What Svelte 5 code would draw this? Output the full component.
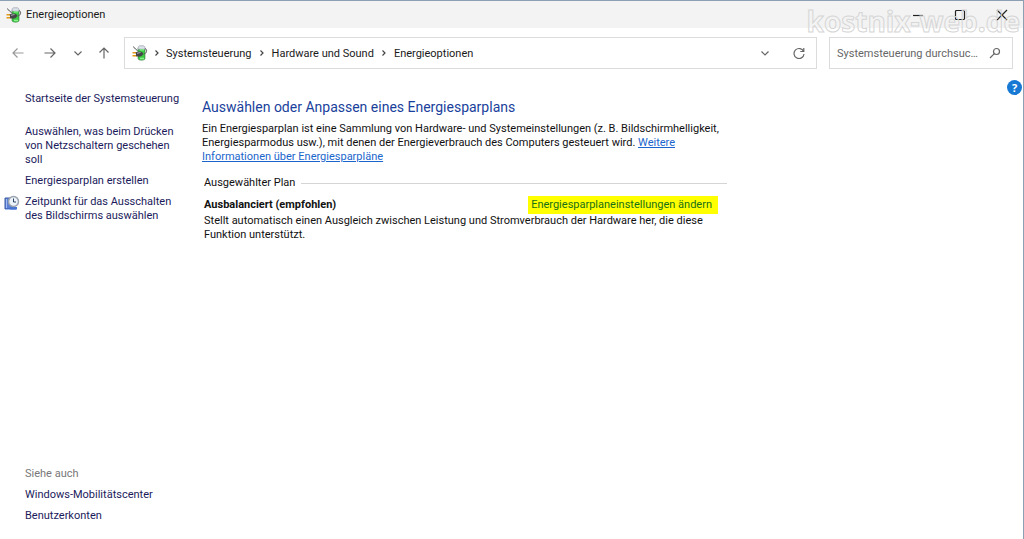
<script>
  const crumbs = ['Systemsteuerung', 'Hardware und Sound', 'Energieoptionen'];
  const tasks = [
    { text: 'Auswählen, was beim Drücken von Netzschaltern geschehen soll' },
    { text: 'Energiesparplan erstellen' },
    { text: 'Zeitpunkt für das Ausschalten des Bildschirms auswählen', icon: true }
  ];
  const related = ['Windows-Mobilitätscenter', 'Benutzerkonten'];
</script>

{#snippet power()}
  <svg class="power" width="16" height="16" viewBox="0 0 16 16" aria-hidden="true">
    <path d="M6 3.500h7v10c0 2.200-7 2.200-7 0z" fill="#3cca43" stroke="#397341" stroke-width=".6" />
    <path d="M6 4.200h7V2.200L11.500.8h-4L6 2.200z" fill="#dde2ea" stroke="#8a929e" stroke-width=".6" />
    <path d="M8 4.900h4M8 13.500h4" stroke="#8af28a" stroke-width="1.300" />
    <path d="M1.500 1.500C2 4 4 3 5.500 6M11.500 9c3-.5 3.500-2.500 2.800-4.500l-1.300-1" fill="none" stroke="#555" stroke-width="1" />
    <path d="M.5 7.800h4M.5 10.800h4.500" stroke="#e09a18" stroke-width="1.500" />
    <path d="M3.800 7.200c2.500-1.300 5.500-1 7 .6 1 1.700-1 3.900-3.500 3.900l-3.200-.5z" fill="#444648" />
    <path d="M5 8.300 8.500 7.500" stroke="#b4b9bd" stroke-width=".9" />
  </svg>
{/snippet}

{#snippet chevron()}
  <svg width="6" height="8" viewBox="0 0 6 8" aria-hidden="true"><path d="m1.500 1.500 2.500 2.500-2.500 2.500" fill="none" stroke="#444" stroke-width="1.200" /></svg>
{/snippet}

<div class="window">
  <header class="titlebar">
    {@render power()}
    <span class="caption">Energieoptionen</span>
    <div class="controls">
      <button aria-label="Minimieren"><svg width="12" height="12"><path d="M1 6.500h10" /></svg></button>
      <button aria-label="Maximieren"><svg width="12" height="12"><rect x="1.500" y="1.500" width="9" height="9" rx="1" /></svg></button>
      <button aria-label="Schließen"><svg width="12" height="12"><path d="m1 1 10 10M11 1 1 11" /></svg></button>
    </div>
    <div class="watermark">kostnix-web.de</div>
  </header>

  <nav class="toolbar" aria-label="Navigation">
    <div class="history">
      <button class="dim" aria-label="Zurück"><svg width="12" height="12"><path d="M11.500 6H1M5.500 1.500 1 6l4.500 4.500" /></svg></button>
      <button aria-label="Vorwärts"><svg width="12" height="12"><path d="M.5 6H11M6.500 1.500 11 6l-4.500 4.500" /></svg></button>
      <button aria-label="Zuletzt besucht"><svg width="12" height="12"><path d="m2.500 4.500 3.500 3.500 3.500-3.500" /></svg></button>
      <button aria-label="Nach oben"><svg width="12" height="12"><path d="M6 11.500V1M1.500 5.500 6 1l4.500 4.500" /></svg></button>
    </div>
    <div class="address">
      {@render power()}
      {#each crumbs as crumb}
        <span class="sep">{@render chevron()}</span>
        <a class="crumb" href="#top">{crumb}</a>
      {/each}
      <div class="address-tools">
        <button aria-label="Vorherige Orte"><svg width="12" height="12"><path d="m2.500 4.500 3.500 3.500 3.500-3.500" /></svg></button>
        <button aria-label="Aktualisieren"><svg width="12" height="12"><path d="M10.600 4.500A5 5 0 1 0 11 7M10.800 1v3.500h-3.500" /></svg></button>
      </div>
    </div>
    <div class="search">
      <input type="text" aria-label="Systemsteuerung durchsuchen" placeholder="Systemsteuerung durchsuc..." />
      <button aria-label="Suchen"><svg width="12" height="12"><circle cx="7.500" cy="4.500" r="3" /><path d="M5.300 6.700 1 11" /></svg></button>
    </div>
  </nav>

  <div class="body">
    <aside>
      <a class="home" href="#home">Startseite der Systemsteuerung</a>
      <ul class="tasks">
        {#each tasks as task}
          <li>
            <span class="mark">
              {#if task.icon}
                <svg width="16" height="16" viewBox="0 0 16 16" aria-hidden="true">
                  <path d="M1 3h8v11H1z" fill="#5b80d6" stroke="#3c5ca6" />
                  <path d="M2.500 4v9M1 14.500h11" stroke="#a3bcf2" />
                  <path d="M6 12h7v2.500H6z" fill="#4773d2" />
                  <circle cx="9.500" cy="6.500" r="5" fill="#edf3fa" stroke="#9aa2ad" stroke-width="1.500" />
                  <path d="M9.500 3.500v3.500h2.500" fill="none" stroke="#2a4065" />
                </svg>
              {/if}
            </span>
            <a href="#task">{task.text}</a>
          </li>
        {/each}
      </ul>
      <div class="related">
        <span>Siehe auch</span>
        {#each related as item}
          <a href="#related">{item}</a>
        {/each}
      </div>
    </aside>

    <main>
      <h1>Auswählen oder Anpassen eines Energiesparplans</h1>
      <p class="intro">
        Ein Energiesparplan ist eine Sammlung von Hardware- und Systemeinstellungen (z. B. Bildschirmhelligkeit,
        Energiesparmodus usw.), mit denen der Energieverbrauch des Computers gesteuert wird.
        <a href="#info">Weitere Informationen über Energiesparpläne</a>
      </p>
      <section>
        <h2>Ausgewählter Plan</h2>
        <div class="plan">
          <strong>Ausbalanciert (empfohlen)</strong>
          <a href="#change">Energiesparplaneinstellungen ändern</a>
        </div>
        <p>Stellt automatisch einen Ausgleich zwischen Leistung und Stromverbrauch der Hardware her, die diese Funktion unterstützt.</p>
      </section>
    </main>

    <button class="help" aria-label="Hilfe">?</button>
  </div>
</div>

<style>
  :global(body) { margin: 0; }
  .window {
    box-sizing: border-box;
    min-height: 100vh;
    display: flex;
    flex-direction: column;
    border-top: 1px solid #8d9fb3;
    border-right: 1px solid #8d9fb3;
    background: #fff;
    color: #1a1a1a;
    font: 11px/14px Roboto, "Noto Sans", sans-serif;
  }
  a { color: inherit; text-decoration: none; }
  button { padding: 0; border: 0; background: none; display: grid; place-items: center; }
  button svg { fill: none; stroke: #666; stroke-width: 1.2; }
  h1, h2, p, ul { margin: 0; padding: 0; font-weight: 400; }
  svg { display: block; flex: none; }

  .titlebar { position: relative; display: flex; align-items: center; height: 27px; padding-left: 6px; gap: 4px; background: #f3f3f3; }
  .controls { display: flex; margin-left: auto; }
  .controls button { width: 42px; height: 27px; }
  .controls svg { stroke: #222; }
  .watermark {
    position: absolute;
    top: 4px;
    right: 3px;
    font: 700 28px/32px "Open Sans", sans-serif;
    color: transparent;
    -webkit-text-stroke: 1px #d6d6d6;
    pointer-events: none;
  }

  .toolbar { display: flex; align-items: center; padding: 9px 10px 9px 6px; }
  .history { display: flex; width: 118px; }
  .history button { width: 29px; height: 24px; }
  .history button:first-child { width: 24px; }
  .history button:nth-child(2) { width: 40px; }
  .history button:nth-child(3) { width: 16px; }
  .history button:last-child { width: 36px; }
  .history .dim svg { stroke: #999; }
  .address, .search { box-sizing: border-box; height: 32px; display: flex; align-items: center; border: 1px solid #dcdcdc; }
  .address { flex: 1; padding-left: 7px; }
  .sep { width: 18px; display: grid; place-items: center; }
  .crumb + .sep { width: 20px; }
  .crumb { white-space: nowrap; line-height: 16px; padding-top: 1px; }
  .address-tools { display: flex; margin-left: auto; }
  .address-tools button { width: 34px; height: 30px; }
  .search { width: 184px; margin-left: 12px; padding-left: 7px; }
  .search input { flex: 1; min-width: 0; border: 0; padding: 1px 0 0; outline: 0; font: inherit; background: none; text-overflow: ellipsis; }
  .search input::placeholder { color: #666; opacity: 1; }
  .search button { width: 34px; height: 30px; }

  .body { flex: 1; display: flex; color: #111; }
  aside { width: 177px; flex: none; display: flex; flex-direction: column; padding: 14px 0 16px; margin-right: 25px; box-sizing: border-box; color: #1b1b5c; }
  .home, .related { margin-left: 25px; white-space: nowrap; }
  .tasks { list-style: none; display: grid; gap: 7px; margin-top: 19px; }
  .tasks li { display: flex; }
  .mark { width: 21px; padding-left: 4px; flex: none; }
  .related { display: grid; gap: 7px; margin-top: auto; }
  .related span { color: #777; }

  main { flex: 0 1 525px; padding-top: 19px; }
  h1 { font-size: 14px; line-height: 20px; color: #1a3f9c; }
  .intro { margin-top: 5px; }
  .intro a { color: #1a66cc; text-decoration: underline; }
  section { margin-top: 12px; padding-left: 2px; }
  h2 { display: flex; align-items: center; gap: 6px; font-size: 11px; line-height: 14px; }
  h2::after { content: ""; flex: 1; height: 1px; background: #d5d5d5; }
  .plan { display: flex; justify-content: space-between; align-items: center; margin: 6px 9px 0 0; }
  .plan a { padding: 2px 6px 2px 3px; background: #ff0; color: #187018; }
  .help { width: 15px; height: 15px; margin: 2px 1px 0 auto; border-radius: 50%; background: #1779d4; color: #fff; font: 700 11px/15px "Open Sans", sans-serif; }
</style>
